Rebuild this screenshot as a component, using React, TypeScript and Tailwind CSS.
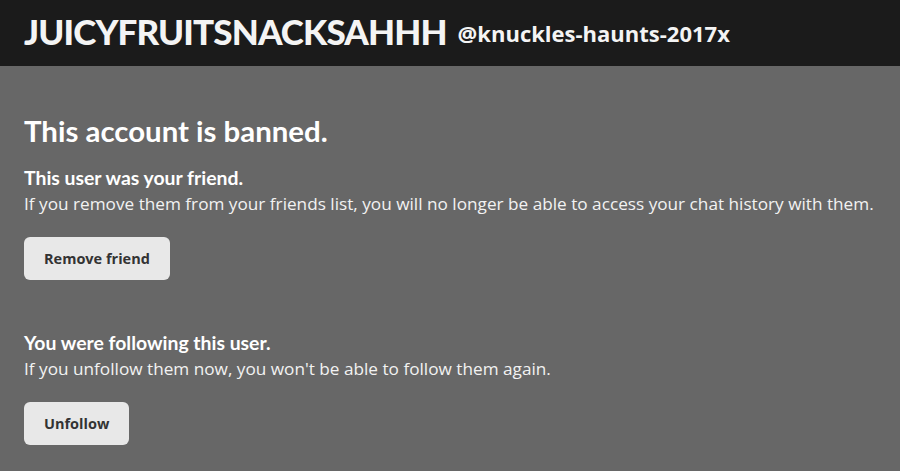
const Section = ({
  heading,
  text,
  action,
}: {
  heading: string;
  text: string;
  action: string;
}) => (
  <div className="flex flex-col items-start">
    <p className="font-['Lato',sans-serif] font-bold text-[19.4px] leading-[26px] text-white">
      {heading}
    </p>
    <p className="font-['Open_Sans',sans-serif] text-[17.2px] leading-[26px] text-[#f2f2f2]">
      {text}
    </p>
    <button className="mt-5 h-[43px] px-5 rounded-md bg-[#e8e8e8] font-['Open_Sans',sans-serif] font-bold text-[14.5px] text-[#333]">
      {action}
    </button>
  </div>
);

export default function App() {
  return (
    <div className="w-[900px] h-[471px] bg-[#676767] overflow-hidden">
      <header className="h-[66px] bg-[#1b1b1b] flex items-center gap-[11px] px-6">
        <h1 className="font-['Lato',sans-serif] font-black text-[35px] text-[#f4f4f4] tracking-tight -mt-1">
          JUICYFRUITSNACKSAHHH
        </h1>
        <span className="font-['Open_Sans',sans-serif] font-bold text-[22px] text-[#f4f4f4]">
          @knuckles-haunts-2017x
        </span>
      </header>

      <main className="px-6 pt-[47px] flex flex-col">
        <h2 className="font-['Lato',sans-serif] font-bold text-[29.4px] text-white leading-9 mb-4">
          This account is banned.
        </h2>
        <Section
          heading="This user was your friend."
          text="If you remove them from your friends list, you will no longer be able to access your chat history with them."
          action="Remove friend"
        />
        <div className="mt-[50px]">
          <Section
            heading="You were following this user."
            text="If you unfollow them now, you won't be able to follow them again."
            action="Unfollow"
          />
        </div>
      </main>
    </div>
  );
}
